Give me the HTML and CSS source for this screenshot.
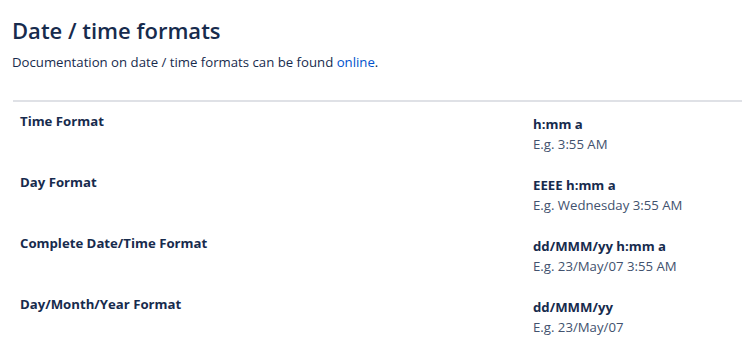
FILE: index.html
```html
<!DOCTYPE html>
<html lang="en">
<head>
    <meta charset="UTF-8">
    <title>Date / time formats</title>
    <link rel="stylesheet" href="styles.css">
</head>
<body>
    <section class="page">
        <h1>Date / time formats</h1>
        <p class="intro">Documentation on date / time formats can be found <a href="#">online</a>.</p>

        <div class="formats">
            <div class="row">
                <div class="label">Time Format</div>
                <div class="value">
                    <strong>h:mm a</strong>
                    <span>E.g. 3:55 AM</span>
                </div>
            </div>
            <div class="row">
                <div class="label">Day Format</div>
                <div class="value">
                    <strong>EEEE h:mm a</strong>
                    <span>E.g. Wednesday 3:55 AM</span>
                </div>
            </div>
            <div class="row">
                <div class="label">Complete Date/Time Format</div>
                <div class="value">
                    <strong>dd/MMM/yy h:mm a</strong>
                    <span>E.g. 23/May/07 3:55 AM</span>
                </div>
            </div>
            <div class="row">
                <div class="label">Day/Month/Year Format</div>
                <div class="value">
                    <strong>dd/MMM/yy</strong>
                    <span>E.g. 23/May/07</span>
                </div>
            </div>
        </div>
    </section>
</body>
</html>
```

FILE: styles.css
```css
:root {
    --text: #172b4d;
    --muted: #42526e;
    --link: #0052cc;
    --border: #dfe1e6;
}

body {
    margin: 0;
    font-family: "Open Sans", sans-serif;
    font-size: 13.2px;
    color: var(--text);
    background: #ffffff;
}

.page {
    padding: 14px 0 0 12px;
}

h1 {
    margin: 0;
    font-size: 22px;
    font-weight: 600;
    line-height: 32px;
}

.intro {
    margin: 6px 0 0;
    line-height: 20px;
}

.intro a {
    color: var(--link);
    text-decoration: none;
}

.formats {
    margin-top: 28px;
    margin-left: 1px;
    border-top: 2px solid var(--border);
}

.row {
    display: grid;
    grid-template-columns: 513px 1fr;
    padding: 9px 7px;
}

.label {
    font-weight: 700;
    line-height: 20px;
}

.value {
    display: flex;
    flex-direction: column;
    padding-top: 3px;
    line-height: 20px;
}

.value span {
    color: var(--muted);
}
```
